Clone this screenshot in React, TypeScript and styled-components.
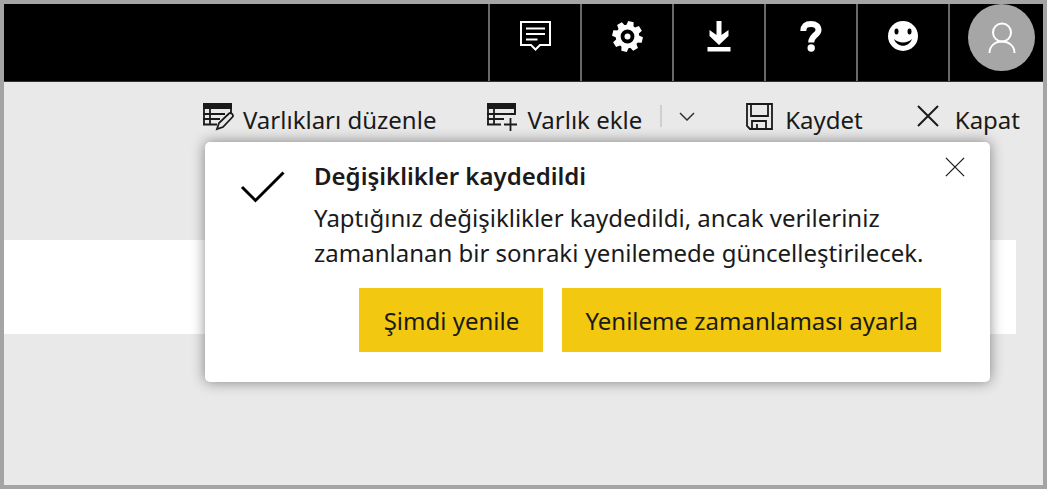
import React from "react";
import styled, { createGlobalStyle } from "styled-components";

const GlobalStyle = createGlobalStyle`
  *, *::before, *::after { box-sizing: border-box; }
  body {
    margin: 0;
    background: #e9e9e9;
    color: #1a1a1a;
    font-family: "Noto Sans", "Open Sans", sans-serif;
    font-size: 24px;
    line-height: 34px;
  }
  button { font: inherit; color: inherit; border: 0; background: none; padding: 0; cursor: pointer; }
  svg { display: block; flex: none; }
`;

const Frame = styled.div`
  display: flex;
  flex-direction: column;
  min-height: 100vh;
  border: 4px solid #a4a4a4;
  background: #e9e9e9;
`;

const TopBar = styled.header`
  display: flex;
  justify-content: flex-end;
  height: 78px;
  background: #000;
  border-bottom: 1px solid #333;
`;

const TopButton = styled.button`
  display: flex;
  justify-content: center;
  align-items: flex-start;
  width: 92px;
  padding-top: 17px;
  border-left: 2px solid #686868;
  color: #fff;
`;

const AccountButton = styled(TopButton)`
  width: 95px;
  padding: 0 0 0 10px;
`;

const Avatar = styled.span`
  display: flex;
  align-items: center;
  justify-content: center;
  width: 67px;
  height: 67px;
  border-radius: 50%;
  background: #a6a6a6;
`;

const Workspace = styled.main`
  position: relative;
  flex: 1;
`;

const Toolbar = styled.div`
  display: flex;
  justify-content: flex-end;
  height: 60px;
  padding: 21px 23px 0 0;
`;

const Tool = styled.button<{ $gap: number; $after: number }>`
  display: flex;
  align-items: flex-start;
  gap: ${(p) => p.$gap}px;
  margin-right: ${(p) => p.$after}px;
  white-space: nowrap;
`;

const Split = styled.div`
  display: flex;
  align-items: flex-start;
  margin-right: 51px;
`;

const MoreButton = styled.button`
  display: flex;
  padding: 9px 0 9px 17px;
`;

const Divider = styled.span`
  width: 2px;
  height: 22px;
  margin-top: 2px;
  background: #cfcfcf;
`;

const Band = styled.section`
  height: 94px;
  margin: 98px 27px 0 0;
  background: #fff;
`;

const Dialog = styled.section`
  position: absolute;
  top: 60px;
  right: 53px;
  width: 785px;
  max-width: calc(100% - 53px);
  padding: 17px 49px 30px 35px;
  border-radius: 5px;
  background: #fff;
  box-shadow: 0 0 14px rgba(0, 0, 0, 0.45);
`;

const Message = styled.div`
  display: flex;
  gap: 29px;
`;

const CheckIcon = styled.svg`
  margin-top: 11px;
`;

const Title = styled.h2`
  margin: 0 0 7px;
  font-size: 24px;
  line-height: 34px;
  font-weight: 600;
`;

const Text = styled.p`
  margin: 0;
  line-height: 35px;
  white-space: nowrap;
`;

const Actions = styled.div`
  display: flex;
  justify-content: flex-end;
  gap: 19px;
  margin-top: 18px;
`;

const Action = styled.button`
  min-width: 184px;
  height: 64px;
  padding: 2px 23px 0;
  background: #f2c811;
`;

const CloseButton = styled.button`
  position: absolute;
  top: 15px;
  right: 25px;
`;

const Comment = () => (
  <svg width="32" height="31" viewBox="0 0 32 31" fill="none" stroke="#fff" strokeWidth="2">
    <path d="M2 1H31V24H21L16.500 28.500L12 24H2Z" />
    <path d="M7 7.500H26M7 13H26M7 18.500H18.500" />
  </svg>
);

const Gear = () => (
  <svg width="31" height="31" viewBox="-15.500 -15.500 31 31" fill="#fff">
    {[0, 45, 90, 135, 180, 225, 270, 315].map((a) => (
      <path key={a} d="M-4 -9L-2.800 -15.200H2.800L4 -9Z" transform={`rotate(${a + 13})`} />
    ))}
    <circle r="9.300" fill="none" stroke="#fff" strokeWidth="4.800" />
    <circle r="3" />
  </svg>
);

const Download = () => (
  <svg width="24" height="31" viewBox="0 0 24 31" fill="#fff">
    <path d="M9.500 0H14.500V14L21.500 9V15L12 24L2.500 15V9L9.500 14Z" />
    <rect x="0.500" y="26" width="23" height="4.500" />
  </svg>
);

const Help = () => (
  <svg width="22" height="31" viewBox="0 0 22 31" fill="none" stroke="#fff">
    <path d="M3.300 10C3.500 5 6 3 11 3C15.600 3 18.500 5.200 18.500 9C18.500 14 11.200 14.500 11.200 21.500" strokeWidth="6" />
    <circle cx="11.200" cy="27" r="3.700" fill="#fff" stroke="none" />
  </svg>
);

const Smile = () => (
  <svg width="31" height="31" viewBox="0 0 31 31">
    <circle cx="15" cy="15" r="15" fill="#fff" />
    <ellipse cx="8.500" cy="10.500" rx="2" ry="3" />
    <ellipse cx="21.500" cy="10.500" rx="2" ry="3" />
    <path d="M6 18C10.500 22.500 19.500 22.500 24 18C21 27 9 27 6 18Z" />
  </svg>
);

const Person = () => (
  <svg width="28" height="32" viewBox="0 0 28 32" fill="none" stroke="#fff" strokeWidth="2">
    <circle cx="14" cy="10.500" r="9" />
    <path d="M1.500 31C1.500 24 7 19.500 14 19.500S26.500 24 26.500 31" />
  </svg>
);

const TableBase = () => (
  <>
    <path d="M0 0H29V6H0Z" fill="#1a1a1a" stroke="none" />
    <path d="M1 5V22M7 6V22M28 5V10" />
    <path d="M0 11H22M0 16H17M0 21.500H14" />
  </>
);

const EditTable = () => (
  <svg width="31" height="28" viewBox="0 0 31 28" fill="none" stroke="#1a1a1a" strokeWidth="1.800">
    <TableBase />
    <path d="M14 26L16 20L26 10.500C28 9 31 12 29.500 14L20 24Z" fill="#e9e9e9" />
  </svg>
);

const AddTable = () => (
  <svg width="31" height="28" viewBox="0 0 31 28" fill="none" stroke="#1a1a1a" strokeWidth="1.800">
    <TableBase />
    <path d="M22 11H28V6" />
    <path d="M23.500 15V28M17 21.500H30" />
  </svg>
);

const Save = () => (
  <svg width="27" height="27" viewBox="0 0 27 27" fill="none" stroke="#1a1a1a" strokeWidth="1.800">
    <path d="M1 1H26V26H4L1 23Z" />
    <path d="M5 1V13H22V1M6 26V18H20V26M11 26V21" />
  </svg>
);

const Cross = ({ size, weight }: { size: number; weight: number }) => (
  <svg width={size} height={size} viewBox="0 0 22 22" stroke="#1a1a1a" strokeWidth={weight}>
    <path d="M1 1L21 21M21 1L1 21" />
  </svg>
);

const CrossSlot = styled.span`
  padding-top: 2px;
`;

export default function App() {
  return (
    <>
      <GlobalStyle />
      <Frame>
        <TopBar>
          <TopButton aria-label="Yorumlar"><Comment /></TopButton>
          <TopButton aria-label="Ayarlar"><Gear /></TopButton>
          <TopButton aria-label="İndir"><Download /></TopButton>
          <TopButton aria-label="Yardım"><Help /></TopButton>
          <TopButton aria-label="Geri bildirim"><Smile /></TopButton>
          <AccountButton aria-label="Hesap"><Avatar><Person /></Avatar></AccountButton>
        </TopBar>
        <Workspace>
          <Toolbar>
            <Tool $gap={9} $after={51}><EditTable />Varlıkları düzenle</Tool>
            <Split>
              <Tool $gap={9} $after={18}><AddTable />Varlık ekle</Tool>
              <Divider />
              <MoreButton aria-label="Diğer seçenekler">
                <svg width="16" height="9" viewBox="0 0 16 9" fill="none" stroke="#333" strokeWidth="1.500">
                  <path d="M1 1L8 8L15 1" />
                </svg>
              </MoreButton>
            </Split>
            <Tool $gap={12} $after={54}><Save />Kaydet</Tool>
            <Tool $gap={16} $after={0}><CrossSlot><Cross size={22} weight={2} /></CrossSlot>Kapat</Tool>
          </Toolbar>
          <Band />
          <Dialog role="dialog" aria-labelledby="saved-title">
            <Message>
              <CheckIcon width="45" height="34" viewBox="0 0 45 34" fill="none" stroke="#000" strokeWidth="3">
                <path d="M2 17L15.500 30.500L43.500 2.500" />
              </CheckIcon>
              <div>
                <Title id="saved-title">Değişiklikler kaydedildi</Title>
                <Text>
                  Yaptığınız değişiklikler kaydedildi, ancak verileriniz
                  <br />
                  zamanlanan bir sonraki yenilemede güncelleştirilecek.
                </Text>
              </div>
            </Message>
            <Actions>
              <Action>Şimdi yenile</Action>
              <Action>Yenileme zamanlaması ayarla</Action>
            </Actions>
            <CloseButton aria-label="Kapat"><Cross size={20} weight={1.4} /></CloseButton>
          </Dialog>
        </Workspace>
      </Frame>
    </>
  );
}
